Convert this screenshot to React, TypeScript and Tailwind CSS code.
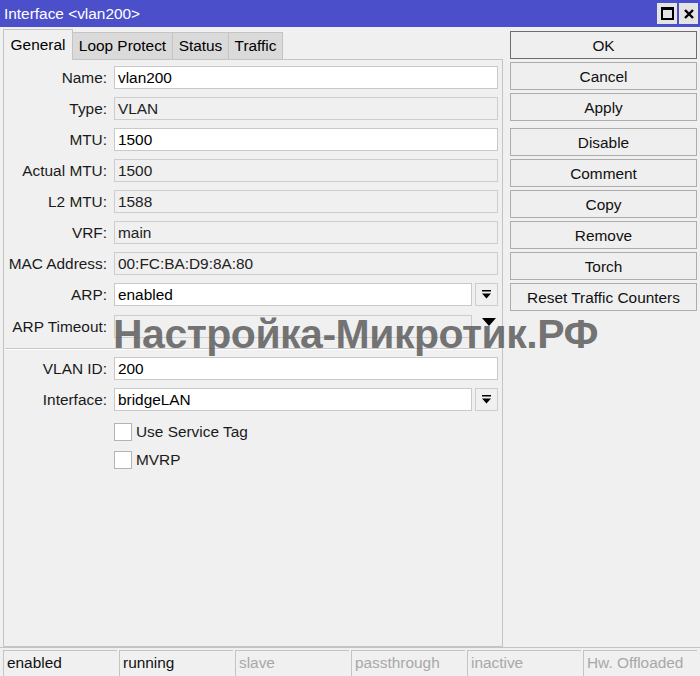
import React from 'react';

type Field = {
  label: string;
  value: string;
  editable?: boolean;
  dropdown?: boolean;
};

const topFields: Field[] = [
  { label: 'Name:', value: 'vlan200', editable: true },
  { label: 'Type:', value: 'VLAN' },
  { label: 'MTU:', value: '1500', editable: true },
  { label: 'Actual MTU:', value: '1500' },
  { label: 'L2 MTU:', value: '1588' },
  { label: 'VRF:', value: 'main' },
  { label: 'MAC Address:', value: '00:FC:BA:D9:8A:80' },
  { label: 'ARP:', value: 'enabled', editable: true, dropdown: true },
];

const bottomFields: Field[] = [
  { label: 'VLAN ID:', value: '200', editable: true },
  { label: 'Interface:', value: 'bridgeLAN', editable: true, dropdown: true },
];

const tabs = [
  { name: 'General', w: 'w-[70px]' },
  { name: 'Loop Protect', w: 'w-[100px]' },
  { name: 'Status', w: 'w-[56px]' },
  { name: 'Traffic', w: 'w-[54px]' },
];

const statusCells = [
  { text: 'enabled', on: true },
  { text: 'running', on: true },
  { text: 'slave', on: false },
  { text: 'passthrough', on: false },
  { text: 'inactive', on: false },
  { text: 'Hw. Offloaded', on: false },
];

function DropArrow() {
  return (
    <svg width="11" height="11" viewBox="0 0 11 11">
      <rect x="1" y="1" width="9" height="1.5" fill="#000" />
      <path d="M1 4.5 H10 L5.5 9.5 Z" fill="#000" />
    </svg>
  );
}

function FieldRow({ field }: { field: Field }) {
  return (
    <div className="flex items-center h-[23px]">
      <div className="w-[104px] text-right pr-px pt-px text-[#1a1a1a]">{field.label}</div>
      <div className="ml-[6px] flex gap-[3px]">
        <div
          className={
            field.editable
              ? `h-[23px] ${field.dropdown ? 'w-[358px]' : 'w-[384px]'} bg-white border border-[#c9c9c9] px-[3px] pt-px flex items-center`
              : 'h-[23px] w-[384px] bg-[#f0f0f0] border border-[#cdcdcd] px-[3px] pt-px flex items-center text-[#222]'
          }
        >
          {field.value}
        </div>
        {field.dropdown && (
          <div className="w-[23px] h-[23px] border border-[#cdcdcd] bg-[#f0f0f0] flex items-center justify-center">
            <DropArrow />
          </div>
        )}
      </div>
    </div>
  );
}

function CheckRow({ label }: { label: string }) {
  return (
    <div className="flex items-center h-[18px] ml-[110px]">
      <div className="w-[18px] h-[18px] bg-white border border-[#b4b4b4]" />
      <span className="ml-[4px] text-[#1a1a1a]">{label}</span>
    </div>
  );
}

function DialogButton({ label, primary }: { label: string; primary?: boolean }) {
  return (
    <div
      className={`h-[28px] w-[187px] flex items-center justify-center pt-px bg-[#efefef] border ${
        primary ? 'border-[#6e6e6e]' : 'border-[#adadad]'
      } text-[#111]`}
    >
      {label}
    </div>
  );
}

export default function App() {
  return (
    <div
      className="relative w-[700px] h-[676px] bg-[#f0f0f0] flex flex-col overflow-hidden text-[15.4px] leading-none text-black"
      style={{ fontFamily: '"Liberation Sans", Arial, sans-serif' }}
    >
      {/* title bar */}
      <div className="h-[27px] bg-[#4b4fca] flex items-center justify-between pl-[4px] pr-[2px]">
        <span className="text-white">Interface &lt;vlan200&gt;</span>
        <div className="flex gap-[2px]">
          <div className="w-[20px] h-[21px] bg-[#e4e4e4] flex items-center justify-center">
            <div className="w-[13px] h-[13px] border-2 border-black border-t-[3px]" />
          </div>
          <div className="w-[19px] h-[21px] bg-[#e4e4e4] flex items-center justify-center">
            <svg width="12" height="12" viewBox="0 0 12 12">
              <path d="M2 2 L10 10 M10 2 L2 10" stroke="#000" strokeWidth="2.4" />
            </svg>
          </div>
        </div>
      </div>

      <div className="flex flex-1">
        {/* left: tabs + form */}
        <div className="w-[505px] flex flex-col">
          <div className="h-[32px] flex items-end pl-[3px]">
            {tabs.map((t, i) =>
              i === 0 ? (
                <div
                  key={t.name}
                  className={`${t.w} h-[31px] mb-[-1px] relative z-10 bg-[#f0f0f0] border border-b-0 border-[#c4c4c4] flex items-center justify-center`}
                >
                  {t.name}
                </div>
              ) : (
                <div
                  key={t.name}
                  className={`${t.w} h-[27px] bg-[#dadada] border border-l-0 border-b-0 border-[#c4c4c4] flex items-center justify-center`}
                >
                  {t.name}
                </div>
              )
            )}
          </div>
          <div className="ml-[3px] w-[500px] flex-1 border border-[#c4c4c4] pt-[6px] flex flex-col">
            <div className="flex flex-col gap-[8px]">
              {topFields.map((f) => (
                <FieldRow key={f.label} field={f} />
              ))}
              {/* ARP Timeout: unset field with collapse arrow */}
              <div className="flex items-center h-[23px] mt-px">
                <div className="w-[104px] text-right pr-px pt-px text-[#1a1a1a]">ARP Timeout:</div>
                <div className="ml-[6px] h-[23px] w-[358px] border border-[#cdcdcd] bg-[#f0f0f0]" />
                <svg width="14" height="8" viewBox="0 0 14 8" className="ml-[10px] mt-[-10px]">
                  <path d="M0 0 H14 L7 8 Z" fill="#000" />
                </svg>
              </div>
            </div>
            <div className="mt-[10px] ml-[1px] w-[494px] h-[2px] border-t border-[#c8c8c8] border-b border-b-white" />
            <div className="mt-[7px] flex flex-col gap-[8px]">
              {bottomFields.map((f) => (
                <FieldRow key={f.label} field={f} />
              ))}
            </div>
            <div className="mt-[12px] flex flex-col gap-[10px]">
              <CheckRow label="Use Service Tag" />
              <CheckRow label="MVRP" />
            </div>
          </div>
        </div>

        {/* right: action buttons */}
        <div className="ml-[5px] pt-[4px] flex flex-col">
          <div className="flex flex-col gap-[3px]">
            <DialogButton label="OK" primary />
            <DialogButton label="Cancel" />
            <DialogButton label="Apply" />
          </div>
          <div className="mt-[7px] flex flex-col gap-[3px]">
            {['Disable', 'Comment', 'Copy', 'Remove', 'Torch', 'Reset Traffic Counters'].map((b) => (
              <DialogButton key={b} label={b} />
            ))}
          </div>
        </div>
      </div>

      {/* status bar */}
      <div className="h-[29px] border-t border-[#c4c4c4] flex items-stretch gap-[2px] pl-[3px] pt-[2px]">
        {statusCells.map((c) => (
          <div
            key={c.text}
            className={`w-[114px] border-l border-t border-[#c4c4c4] pl-[3px] pb-[2px] flex items-center ${
              c.on ? 'text-[#111]' : 'text-[#a8a8a8]'
            }`}
          >
            {c.text}
          </div>
        ))}
      </div>

      {/* site watermark */}
      <div className="absolute left-[113px] top-[314px] text-[41px] font-bold text-[#5c5c5c]/85 pointer-events-none whitespace-nowrap tracking-[-0.5px]">
        Настройка-Микротик.РФ
      </div>
    </div>
  );
}
